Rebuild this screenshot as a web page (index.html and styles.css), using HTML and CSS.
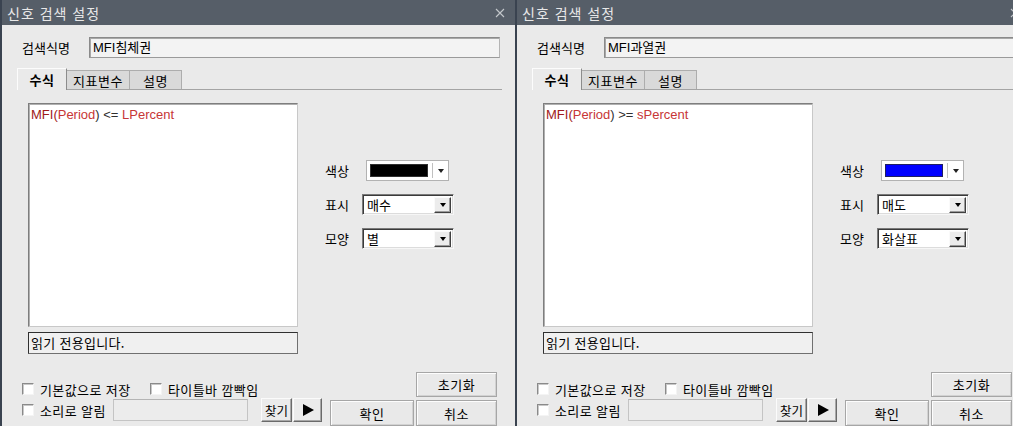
FILE: index.html
```html
<!DOCTYPE html>
<html lang="ko">
<head>
<meta charset="utf-8">
<title>신호 검색 설정</title>
<link rel="stylesheet" href="styles.css">
</head>
<body>
<div class="screen">
  <div class="dialog">
    <div class="titlebar">
      <span class="title">신호 검색 설정</span>
      <svg class="close" width="10" height="10" viewBox="0 0 10 10"><path d="M1 1L9 9M9 1L1 9" stroke="#c4c8cc" stroke-width="1.1" fill="none"/></svg>
    </div>
    <div class="body">
      <div class="name-row">
        <span class="label">검색식명</span>
        <div class="field">MFI침체권</div>
      </div>
      <div class="tabs">
        <div class="tab active t1">수식</div>
        <div class="tab t2">지표변수</div>
        <div class="tab t3">설명</div>
      </div>
      <div class="panel">
        <div class="left-col">
          <div class="formula"><span class="fn">MFI(</span><span class="var">Period</span><span class="op">) &lt;= </span><span class="var">LPercent</span></div>
          <div class="status">읽기 전용입니다.</div>
        </div>
        <div class="props">
          <div class="prop"><span class="plabel">색상</span><div class="colorpick"><span class="swatch black"></span><span class="cdiv"></span><span class="carrow"></span></div></div>
          <div class="prop"><span class="plabel">표시</span><div class="select"><span class="sval">매수</span><span class="sbtn"><span class="tri"></span></span></div></div>
          <div class="prop"><span class="plabel">모양</span><div class="select"><span class="sval">별</span><span class="sbtn"><span class="tri"></span></span></div></div>
        </div>
      </div>
      <div class="footer">
        <div class="opts">
          <div class="orow r1">
            <label class="opt w1"><span class="cb"></span><span class="ct">기본값으로 저장</span></label>
            <label class="opt"><span class="cb"></span><span class="ct">타이틀바 깜빡임</span></label>
          </div>
          <div class="orow r2">
            <label class="opt w2"><span class="cb"></span><span class="ct">소리로 알림</span></label>
            <div class="sound"></div>
            <div class="sbutton find">찾기</div>
            <div class="sbutton play"><span class="ptri"></span></div>
          </div>
        </div>
        <div class="btns">
          <div class="btn reset">초기화</div>
          <div class="btn ok">확인</div>
          <div class="btn cancel">취소</div>
        </div>
      </div>
    </div>
  </div>

  <div class="dialog">
    <div class="titlebar">
      <span class="title">신호 검색 설정</span>
      <svg class="close" width="10" height="10" viewBox="0 0 10 10"><path d="M1 1L9 9M9 1L1 9" stroke="#c4c8cc" stroke-width="1.1" fill="none"/></svg>
    </div>
    <div class="body">
      <div class="name-row">
        <span class="label">검색식명</span>
        <div class="field">MFI과열권</div>
      </div>
      <div class="tabs">
        <div class="tab active t1">수식</div>
        <div class="tab t2">지표변수</div>
        <div class="tab t3">설명</div>
      </div>
      <div class="panel">
        <div class="left-col">
          <div class="formula"><span class="fn">MFI(</span><span class="var">Period</span><span class="op">) &gt;= </span><span class="var">sPercent</span></div>
          <div class="status">읽기 전용입니다.</div>
        </div>
        <div class="props">
          <div class="prop"><span class="plabel">색상</span><div class="colorpick"><span class="swatch blue"></span><span class="cdiv"></span><span class="carrow"></span></div></div>
          <div class="prop"><span class="plabel">표시</span><div class="select"><span class="sval">매도</span><span class="sbtn"><span class="tri"></span></span></div></div>
          <div class="prop"><span class="plabel">모양</span><div class="select"><span class="sval">화살표</span><span class="sbtn"><span class="tri"></span></span></div></div>
        </div>
      </div>
      <div class="footer">
        <div class="opts">
          <div class="orow r1">
            <label class="opt w1"><span class="cb"></span><span class="ct">기본값으로 저장</span></label>
            <label class="opt"><span class="cb"></span><span class="ct">타이틀바 깜빡임</span></label>
          </div>
          <div class="orow r2">
            <label class="opt w2"><span class="cb"></span><span class="ct">소리로 알림</span></label>
            <div class="sound"></div>
            <div class="sbutton find">찾기</div>
            <div class="sbutton play"><span class="ptri"></span></div>
          </div>
        </div>
        <div class="btns">
          <div class="btn reset">초기화</div>
          <div class="btn ok">확인</div>
          <div class="btn cancel">취소</div>
        </div>
      </div>
    </div>
  </div>
</div>
</body>
</html>
```
FILE: styles.css
```css
* { box-sizing: border-box; margin: 0; padding: 0; }
html, body { width: 1013px; height: 426px; overflow: hidden; }
body {
  background: #3a4350;
  font-family: "Liberation Sans", "Noto Sans CJK KR", sans-serif;
  font-size: 13px;
  color: #000;
}
.screen {
  display: flex;
  gap: 2px;
  padding-left: 2px;
  width: 1013px;
  height: 426px;
  overflow: hidden;
}
.dialog {
  flex: 0 0 513px;
  width: 513px;
  height: 426px;
  display: flex;
  flex-direction: column;
}
.titlebar {
  height: 25px;
  flex: 0 0 25px;
  background: #565e68;
  display: flex;
  align-items: center;
  justify-content: space-between;
  padding: 0 10px 0 5px;
  color: #e8e8e8;
  font-family: "Noto Sans CJK KR", sans-serif;
  font-size: 14px;
}
.title { letter-spacing: 1px; }
.close { display: block; }
.body {
  flex: 1;
  background: #eaeaea;
  padding-top: 12px;
  display: flex;
  flex-direction: column;
}
.name-row {
  display: flex;
  align-items: center;
  padding-left: 20px;
  height: 21px;
}
.label {
  width: 67px;
  font-family: "Noto Sans CJK KR", sans-serif;
  font-size: 13px;
}
.field {
  width: 411px;
  height: 21px;
  background: #f3f3f3;
  border: 1px solid #8a8a8a;
  border-right-color: #b4b4b4;
  border-bottom-color: #9a9a9a;
  box-shadow: inset 1px 1px 0 #a8a8a8;
  padding: 1px 0 0 3px;
  line-height: 17px;
}
.tabs {
  display: flex;
  align-items: flex-end;
  margin-top: 10px;
  padding-left: 15px;
  height: 21px;
}
.tab {
  height: 19px;
  display: flex;
  align-items: center;
  justify-content: center;
  background: #d9d9d9;
  border: 1px solid #adadad;
  border-bottom: none;
  font-family: "Noto Sans CJK KR", sans-serif;
  letter-spacing: 0.5px;
}
.tab.active {
  position: relative;
  z-index: 1;
  height: 22px;
  margin-bottom: -1px;
  background: #eaeaea;
  border-color: #fcfcfc #8c8c8c transparent #fcfcfc;
  font-weight: bold;
}
.t1 { width: 50px; }
.t2 { width: 63px; border-left: none; }
.t3 { width: 52px; border-left: none; }
.panel {
  margin-left: 15px;
  width: 485px;
  height: 283px;
  border-top: 1px solid #a4a4a4;
  display: flex;
  padding: 13px 0 0 11px;
}
.left-col {
  width: 270px;
  display: flex;
  flex-direction: column;
}
.formula {
  height: 224px;
  background: #fff;
  border: 1px solid #7e7e7e;
  border-right-color: #c8c8c8;
  border-bottom-color: #c8c8c8;
  box-shadow: inset 1px 1px 0 #b0b0b0;
  padding: 3px 0 0 2px;
  line-height: 15px;
  font-size: 13px;
}
.fn { color: #a01a1a; }
.var { color: #c73636; }
.op { color: #303030; }
.status {
  margin-top: 5px;
  height: 22px;
  background: #f0f0f0;
  border: 1px solid #303030;
  border-right-color: #707070;
  border-bottom-color: #707070;
  padding: 1px 0 0 2px;
  line-height: 18px;
  font-family: "Noto Sans CJK KR", sans-serif;
  letter-spacing: 0.3px;
}
.props {
  margin-left: 25px;
  padding-top: 57px;
  display: flex;
  flex-direction: column;
  gap: 13px;
}
.prop {
  display: flex;
  align-items: center;
  height: 21px;
}
.plabel {
  width: 39px;
  padding-left: 2px;
  font-family: "Noto Sans CJK KR", sans-serif;
}
.colorpick {
  margin-left: 4px;
  width: 83px;
  height: 21px;
  background: #fff;
  border: 1px solid #b2b2b2;
  display: flex;
  align-items: center;
  padding-left: 3px;
}
.swatch {
  width: 58px;
  height: 13px;
  border: 1px solid #303030;
}
.swatch.black { background: #000; }
.swatch.blue { background: #0000ff; border-color: #202060; }
.cdiv {
  width: 1px;
  height: 15px;
  background: #c0c0c0;
  margin-left: 4px;
}
.carrow {
  margin-left: 5px;
  width: 0;
  height: 0;
  border-left: 3.5px solid transparent;
  border-right: 3.5px solid transparent;
  border-top: 4px solid #222;
}
.select {
  width: 92px;
  height: 21px;
  background: #fff;
  border: 1px solid;
  border-color: #7a7a7a #f6f6f6 #f6f6f6 #7a7a7a;
  box-shadow: inset 1px 1px 0 #3a3a3a, inset -1px -1px 0 #dcdcdc;
  display: flex;
  align-items: center;
  justify-content: space-between;
  padding: 2px 2px 2px 4px;
}
.sval { font-family: "Noto Sans CJK KR", sans-serif; line-height: 15px; }
.sbtn {
  width: 17px;
  height: 16px;
  background: #ececec;
  border: 1px solid;
  border-color: #fafafa #404040 #404040 #fafafa;
  box-shadow: inset -1px -1px 0 #9a9a9a;
  display: flex;
  align-items: center;
  justify-content: center;
}
.tri {
  width: 0;
  height: 0;
  border-left: 3.5px solid transparent;
  border-right: 3.5px solid transparent;
  border-top: 4px solid #000;
}
.footer {
  display: flex;
  padding-left: 20px;
}
.opts {
  width: 300px;
  margin-right: 8px;
  padding-top: 9px;
  display: flex;
  flex-direction: column;
  gap: 1px;
}
.orow {
  display: flex;
  align-items: center;
}
.r1 { height: 16px; }
.r2 { height: 24px; }
.opt {
  display: flex;
  align-items: center;
  font-family: "Noto Sans CJK KR", sans-serif;
}
.w1 { width: 128px; }
.w2 { width: 91px; }
.cb {
  width: 12px;
  height: 12px;
  flex: 0 0 12px;
  background: #fff;
  border: 1px solid;
  border-color: #8a8a8a #f4f4f4 #f4f4f4 #8a8a8a;
  box-shadow: inset 1px 1px 0 #c8c8c8;
}
.ct { margin-left: 6px; white-space: nowrap; letter-spacing: 0.4px; }
.sound {
  width: 135px;
  height: 22px;
  background: #ececec;
  border: 1px solid #c4c4c4;
  border-top-color: #b4b4b4;
}
.sbutton {
  height: 24px;
  display: flex;
  align-items: center;
  justify-content: center;
  background: #ebebeb;
  border: 1px solid;
  border-color: #fbfbfb #6a6a6a #6a6a6a #fbfbfb;
  box-shadow: inset -1px -1px 0 #a8a8a8;
  font-family: "Noto Sans CJK KR", sans-serif;
}
.find { width: 31px; margin-left: 13px; font-size: 12.5px; }
.play { width: 29px; margin-left: 1px; }
.ptri {
  width: 0;
  height: 0;
  border-top: 6px solid transparent;
  border-bottom: 6px solid transparent;
  border-left: 11px solid #000;
  margin-left: 1px;
}
.btns {
  display: grid;
  grid-template-columns: 84px 81px;
  grid-template-rows: 25px 26px;
  column-gap: 2px;
  row-gap: 3px;
}
.btn {
  display: flex;
  align-items: center;
  justify-content: center;
  background: #e9e9e9;
  border: 1px solid #a6a6a6;
  box-shadow: inset 1px 1px 0 #fdfdfd, inset -1px -1px 0 #d2d2d2;
  font-family: "Noto Sans CJK KR", sans-serif;
  letter-spacing: 0.5px;
}
.reset { grid-column: 2; grid-row: 1; }
.ok { grid-column: 1; grid-row: 2; }
.cancel { grid-column: 2; grid-row: 2; }
```
